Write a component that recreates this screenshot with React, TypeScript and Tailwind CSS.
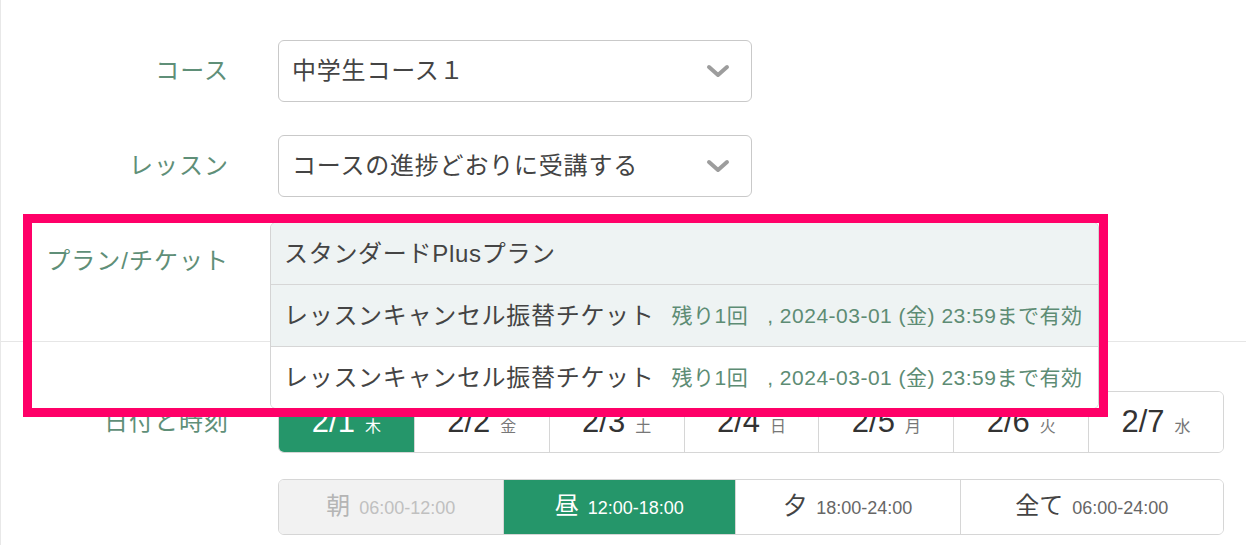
import type { ReactNode } from "react";

const FONT = "font-['Liberation_Sans','Noto_Sans_CJK_JP',sans-serif]";

const dates = [
  { day: "2/1", wd: "木", active: true },
  { day: "2/2", wd: "金" },
  { day: "2/3", wd: "土" },
  { day: "2/4", wd: "日" },
  { day: "2/5", wd: "月" },
  { day: "2/6", wd: "火" },
  { day: "2/7", wd: "水" },
];

const slots = [
  { name: "朝", time: "06:00-12:00", state: "disabled" },
  { name: "昼", time: "12:00-18:00", state: "active" },
  { name: "夕", time: "18:00-24:00", state: "normal" },
  { name: "全て", time: "06:00-24:00", state: "normal" },
];

function Chevron() {
  return (
    <svg width="24" height="14" viewBox="0 0 24 14" fill="none" className="shrink-0">
      <path
        d="M3 3l9 8 9-8"
        stroke="#9d9d9d"
        strokeWidth="4"
        strokeLinecap="round"
        strokeLinejoin="round"
      />
    </svg>
  );
}

function Select({ value }: { value?: string }) {
  return (
    <div className="flex h-[62px] w-[474px] items-center justify-between rounded-[6px] border border-[#c9c9c9] bg-white pl-[13px] pr-[21px] text-[24px] tracking-[0.8px] text-[#444]">
      <span>{value}</span>
      <Chevron />
    </div>
  );
}

function Row({ label, children }: { label: string; children: ReactNode }) {
  return (
    <div className="flex items-center">
      <div className="mr-[-1px] w-[228px] shrink-0 text-right text-[24px] tracking-[1px] text-[#5f8f78]">
        {label}
      </div>
      <div className="ml-[50px]">{children}</div>
    </div>
  );
}

function TicketOption({ bg, last }: { bg: string; last?: boolean }) {
  return (
    <div
      className={`flex items-center pl-[13px] ${bg} ${
        last ? "h-[61px]" : "h-[62px] border-b border-[#d6d6d6]"
      }`}
    >
      <span className="text-[24px] tracking-[0.7px] text-[#444]">レッスンキャンセル振替チケット</span>
      <span className="ml-[17px] whitespace-pre text-[21px] tracking-[0.5px] text-[#5d8c74]">
        {"残り1回   , 2024-03-01 (金) 23:59まで有効"}
      </span>
    </div>
  );
}

export default function App() {
  return (
    <div className={`relative h-[545px] w-full overflow-hidden border-l border-[#e8e8e8] bg-white ${FONT}`}>
      <div className="flex flex-col gap-[33px] pt-[40px] pb-[49px]">
        <Row label="コース">
          <Select value="中学生コース１" />
        </Row>
        <Row label="レッスン">
          <Select value="コースの進捗どおりに受講する" />
        </Row>
        {/* control sits under the open menu */}
        <Row label="プラン/チケット">
          <Select />
        </Row>
      </div>

      <div className="flex flex-col gap-[26px] border-t border-[#e6e6e6] pt-[49px]">
        <Row label="日付と時刻">
          <div className="grid h-[62px] w-[946px] grid-cols-7 overflow-hidden rounded-[6px] border border-[#d6d6d6]">
            {dates.map((d, i) => (
              <div
                key={d.day}
                className={`flex items-baseline justify-center gap-[10px] pt-[14px] ${
                  i > 0 ? "border-l border-[#d6d6d6]" : ""
                } ${d.active ? "bg-[#25966a] text-white" : "bg-white text-[#333]"}`}
              >
                <span className="text-[31px] leading-none">{d.day}</span>
                <span className={`text-[16px] leading-none ${d.active ? "text-white" : "text-[#777]"}`}>
                  {d.wd}
                </span>
              </div>
            ))}
          </div>
        </Row>
        <div className="ml-[277px] grid h-[56px] w-[946px] grid-cols-[224fr_233fr_225fr_264fr] overflow-hidden rounded-[6px] border border-[#d6d6d6]">
          {slots.map((s, i) => (
            <div
              key={s.name}
              className={`flex items-baseline justify-center gap-[9px] pt-[14px] ${
                i > 0 ? "border-l border-[#d6d6d6]" : ""
              } ${
                s.state === "active"
                  ? "bg-[#25966a] text-white"
                  : s.state === "disabled"
                    ? "bg-[#f2f2f2] text-[#b5b5b5]"
                    : "bg-white text-[#444]"
              }`}
            >
              <span className="text-[24px] leading-none">{s.name}</span>
              <span
                className={`text-[18px] leading-none ${
                  s.state === "active" ? "text-white" : s.state === "disabled" ? "text-[#c0c0c0]" : "text-[#666]"
                }`}
              >
                {s.time}
              </span>
            </div>
          ))}
        </div>
      </div>

      {/* open ticket menu */}
      <div className="absolute left-[269px] top-[222px] w-[829px] overflow-hidden rounded-[6px] border border-[#d4d4d4] bg-white">
        <div className="flex h-[62px] items-center border-b border-[#d6d6d6] bg-[#eef3f3] pl-[13px] text-[24px] tracking-[0.7px] text-[#444]">
          スタンダードPlusプラン
        </div>
        <TicketOption bg="bg-[#eef3f3]" />
        <TicketOption bg="bg-white" last />
      </div>

      {/* highlight frame */}
      <div className="pointer-events-none absolute left-[22px] top-[214px] h-[203px] w-[1085px] border-[9px] border-[#ff0068]" />
    </div>
  );
}
